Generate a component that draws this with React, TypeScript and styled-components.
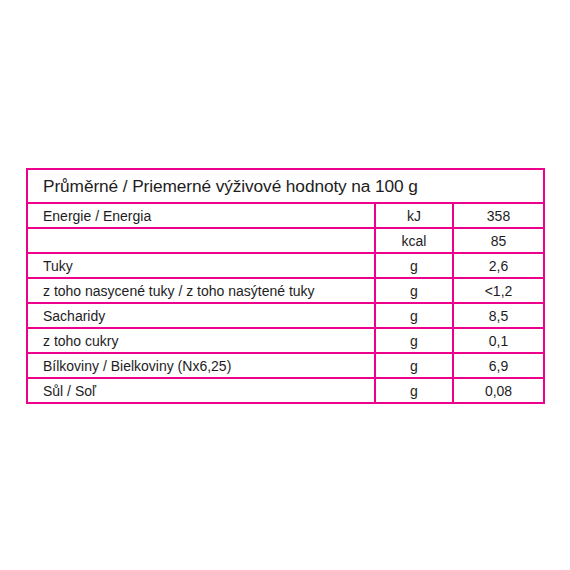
import React from 'react';
import styled, { createGlobalStyle } from 'styled-components';

const GlobalStyle = createGlobalStyle`
  html, body {
    margin: 0;
    padding: 0;
    background: #ffffff;
  }
  body {
    font-family: "Liberation Sans", Arial, sans-serif;
    color: #1e1c1d;
  }
`;

const PINK = '#ec008c';

const Page = styled.div`
  width: 570px;
  height: 570px;
  padding: 168px 27px 0 26px;
  box-sizing: border-box;
`;

const Table = styled.table`
  width: 517px;
  border-collapse: collapse;
  table-layout: fixed;
`;

const HeadCell = styled.th`
  border: 2px solid ${PINK};
  height: 31px;
  padding: 1px 0 0 15px;
  text-align: left;
  font-size: 17.3px;
  font-weight: 400;
  letter-spacing: -0.1px;
  vertical-align: middle;
  white-space: nowrap;
`;

const Cell = styled.td<{ $center?: boolean }>`
  border: 2px solid ${PINK};
  height: 22px;
  padding: ${(p) => (p.$center ? '1px 0 0 0' : '1px 0 0 15px')};
  text-align: ${(p) => (p.$center ? 'center' : 'left')};
  font-size: 14px;
  line-height: 1;
  vertical-align: middle;
  white-space: nowrap;
`;

type Row = [string, string, string];

const rows: Row[] = [
  ['Energie / Energia', 'kJ', '358'],
  ['', 'kcal', '85'],
  ['Tuky', 'g', '2,6'],
  ['z toho nasycené tuky / z toho nasýtené tuky', 'g', '<1,2'],
  ['Sacharidy', 'g', '8,5'],
  ['z toho cukry', 'g', '0,1'],
  ['Bílkoviny / Bielkoviny (Nx6,25)', 'g', '6,9'],
  ['Sůl / Soľ', 'g', '0,08'],
];

const App: React.FC = () => {
  return (
    <Page>
      <GlobalStyle />
      <Table>
        <colgroup>
          <col style={{ width: 348 }} />
          <col style={{ width: 78 }} />
          <col style={{ width: 91 }} />
        </colgroup>
        <thead>
          <tr>
            <HeadCell colSpan={3}>
              Průměrné / Priemerné výživové hodnoty na 100 g
            </HeadCell>
          </tr>
        </thead>
        <tbody>
          {rows.map(([name, unit, value], i) => (
            <tr key={i}>
              <Cell>{name}</Cell>
              <Cell $center>{unit}</Cell>
              <Cell $center>{value}</Cell>
            </tr>
          ))}
        </tbody>
      </Table>
    </Page>
  );
};

export default App;
